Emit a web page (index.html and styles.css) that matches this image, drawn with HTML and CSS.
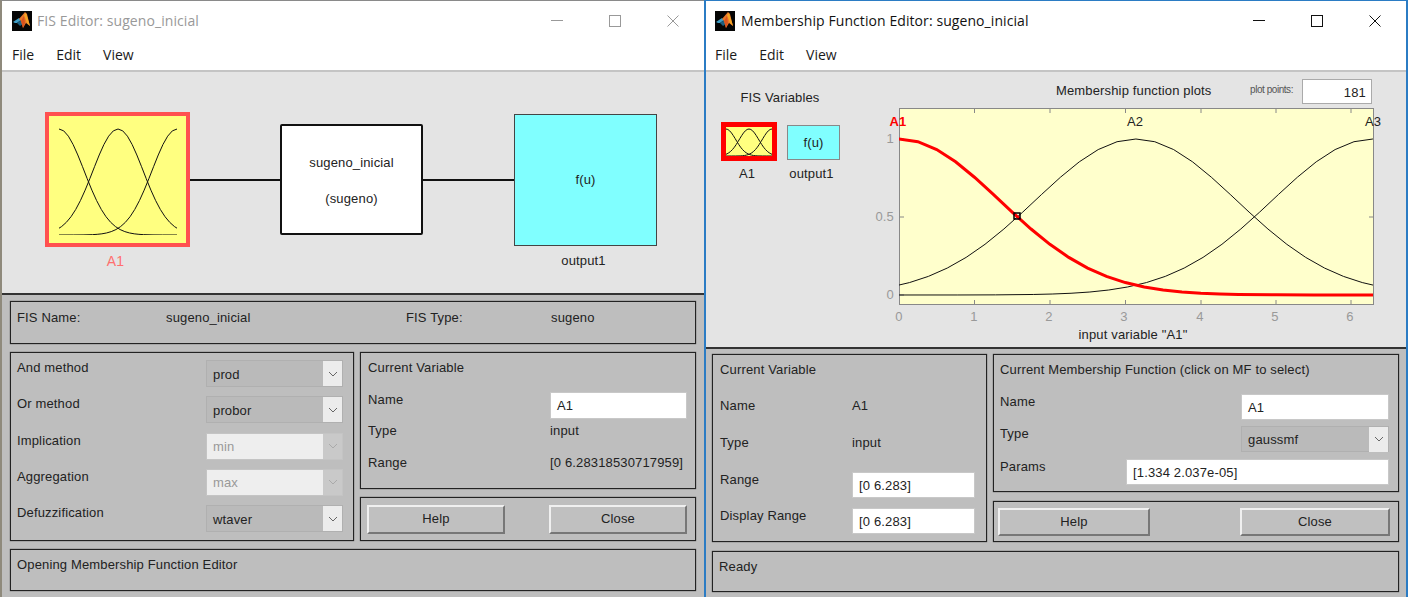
FILE: index.html
```html
<!DOCTYPE html>
<html lang="en">
<head>
    <meta charset="UTF-8">
    <title>FIS Editor and Membership Function Editor</title>
    <link rel="stylesheet" href="styles.css">
</head>
<body>
    <svg class="defs" width="0" height="0">
        <defs>
            <!-- gaussian bell, sigma 1.334, in data units: x is the input, y the membership -->
            <polyline id="bell" points="-6.3,0 -5.5,.0002 -5,.0009 -4.5,.0034 -4.25,.0063 -4,.0112 -3.75,.0192 -3.5,.032 -3.25,.0514 -3,.0798 -2.75,.1194 -2.5,.1727 -2.25,.2411 -2,.325 -1.75,.423 -1.5,.5314 -1.25,.6447 -1,.755 -.75,.8538 -.5,.9322 -.25,.9826 0,1 .25,.9826 .5,.9322 .75,.8538 1,.755 1.25,.6447 1.5,.5314 1.75,.423 2,.325 2.25,.2411 2.5,.1727 2.75,.1194 3,.0798 3.25,.0514 3.5,.032 3.75,.0192 4,.0112 4.25,.0063 4.5,.0034 5,.0009 5.5,.0002 6.3,0"/>
            <symbol id="matlab" viewBox="0 0 20 20">
                <rect width="20" height="20" fill="#050505"/>
                <polygon points="1,11 7,7 9,9 5,12 3,12" fill="#3f9fc8"/>
                <polygon points="5,12 9,9 11,13 8,15" fill="#1d5f80"/>
                <polygon points="7,8 13,1 15,3 18,15 14,12 11,17 9,10" fill="#e8772a"/>
                <polygon points="12,4 14,2 18,15 15,12" fill="#f5a623"/>
                <polygon points="9,10 12,5 13,12 11,17" fill="#d9531e"/>
            </symbol>
            <symbol id="chevron" viewBox="0 0 10 6">
                <polyline points="1,1 5,5 9,1" fill="none" stroke="currentColor"/>
            </symbol>
        </defs>
    </svg>

    <div class="window fis">
        <div class="titlebar">
            <svg class="logo"><use href="#matlab"/></svg>
            <span class="title">FIS Editor: sugeno_inicial</span>
            <div class="controls">
                <svg viewBox="0 0 12 12"><path d="M0 5.500h12"/></svg>
                <svg viewBox="0 0 12 12"><rect x=".5" y=".5" width="11" height="11"/></svg>
                <svg viewBox="0 0 12 12"><path d="M.5.5l11 11M11.500.5l-11 11"/></svg>
            </div>
        </div>
        <div class="menubar"><span>File</span><span>Edit</span><span>View</span></div>

        <div class="diagram">
            <div class="node node-input">
                <svg class="mf-icon" viewBox="0 0 118 111">
                    <g transform="translate(0,111) scale(18.8,-106)">
                        <use href="#bell"/>
                        <use href="#bell" x="3.14"/>
                        <use href="#bell" x="6.28"/>
                    </g>
                </svg>
            </div>
            <div class="wire"></div>
            <div class="node node-system">
                <span>sugeno_inicial</span>
                <span>(sugeno)</span>
            </div>
            <div class="wire"></div>
            <div class="node node-output">f(u)</div>
            <div class="node-label label-input">A1</div>
            <div class="node-label label-output">output1</div>
        </div>

        <div class="panel fis-panel">
            <div class="frame fis-name">
                <span>FIS Name:</span>
                <span>sugeno_inicial</span>
                <span>FIS Type:</span>
                <span>sugeno</span>
            </div>
            <div class="frame methods">
                <span class="field-label">And method</span>
                <div class="popup"><span>prod</span><i><svg><use href="#chevron"/></svg></i></div>
                <span class="field-label">Or method</span>
                <div class="popup"><span>probor</span><i><svg><use href="#chevron"/></svg></i></div>
                <span class="field-label">Implication</span>
                <div class="popup disabled"><span>min</span><i><svg><use href="#chevron"/></svg></i></div>
                <span class="field-label">Aggregation</span>
                <div class="popup disabled"><span>max</span><i><svg><use href="#chevron"/></svg></i></div>
                <span class="field-label">Defuzzification</span>
                <div class="popup"><span>wtaver</span><i><svg><use href="#chevron"/></svg></i></div>
            </div>
            <div class="frame variable">
                <span class="wide">Current Variable</span>
                <span>Name</span>
                <div class="edit">A1</div>
                <span>Type</span>
                <span>input</span>
                <span>Range</span>
                <span>[0 6.28318530717959]</span>
            </div>
            <div class="frame buttons">
                <button>Help</button>
                <button>Close</button>
            </div>
            <div class="frame status">Opening Membership Function Editor</div>
        </div>
    </div>

    <div class="window mf">
        <div class="titlebar">
            <svg class="logo"><use href="#matlab"/></svg>
            <span class="title">Membership Function Editor: sugeno_inicial</span>
            <div class="controls">
                <svg viewBox="0 0 12 12"><path d="M0 5.500h12"/></svg>
                <svg viewBox="0 0 12 12"><rect x=".5" y=".5" width="11" height="11"/></svg>
                <svg viewBox="0 0 12 12"><path d="M.5.5l11 11M11.500.5l-11 11"/></svg>
            </div>
        </div>
        <div class="menubar"><span>File</span><span>Edit</span><span>View</span></div>

        <div class="plot-area">
            <div class="vars">
                <div class="vars-title">FIS Variables</div>
                <div class="vars-row">
                    <div class="var">
                        <div class="var-box var-input">
                            <svg class="mf-icon" viewBox="0 0 46 29">
                                <g transform="translate(0,29) scale(7.32,-27)">
                                    <use href="#bell"/>
                                    <use href="#bell" x="3.14"/>
                                    <use href="#bell" x="6.28"/>
                                </g>
                            </svg>
                        </div>
                        <span>A1</span>
                    </div>
                    <div class="var">
                        <div class="var-box var-output">f(u)</div>
                        <span>output1</span>
                    </div>
                </div>
            </div>
            <div class="plots">
                <div class="plots-head">
                    <span class="plots-title">Membership function plots</span>
                    <span class="plot-points">plot points:</span>
                    <div class="edit points">181</div>
                </div>
                <svg class="plot" width="530" height="240" viewBox="0 0 530 240">
                    <defs><clipPath id="plotClip"><rect x="29" y="3" width="474" height="196"/></clipPath></defs>
                    <rect class="plot-bg" x="29.500" y="3.500" width="474" height="196"/>
                    <path class="ticks" d="M104.500 4v4M180 4v4M255.500 4v4M331 4v4M406 4v4M481 4v4M104.500 199v-4M180 199v-4M255.500 199v-4M331 199v-4M406 199v-4M481 199v-4M30 112h4M503 112h-4M30 34h4M30 190h4"/>
                    <g clip-path="url(#plotClip)">
                        <g transform="translate(29,190) scale(75.45,-156)">
                            <use class="curve" href="#bell" x="3.14"/>
                            <use class="curve" href="#bell" x="6.28"/>
                            <use class="curve-active" href="#bell"/>
                        </g>
                    </g>
                    <rect class="handle" x="144" y="108" width="6" height="6"/>
                    <g class="tick-labels">
                        <text x="29" y="216" text-anchor="middle">0</text>
                        <text x="104" y="216" text-anchor="middle">1</text>
                        <text x="179" y="216" text-anchor="middle">2</text>
                        <text x="254" y="216" text-anchor="middle">3</text>
                        <text x="330" y="216" text-anchor="middle">4</text>
                        <text x="405" y="216" text-anchor="middle">5</text>
                        <text x="480" y="216" text-anchor="middle">6</text>
                        <text x="24" y="38" text-anchor="end">1</text>
                        <text x="24" y="116" text-anchor="end">0.5</text>
                        <text x="24" y="194" text-anchor="end">0</text>
                    </g>
                    <text class="mf-name active" x="28" y="21" text-anchor="middle">A1</text>
                    <text class="mf-name" x="265" y="21" text-anchor="middle">A2</text>
                    <text class="mf-name" x="503" y="21" text-anchor="middle">A3</text>
                    <text class="mf-name" x="263" y="234" text-anchor="middle">input variable "A1"</text>
                </svg>
            </div>
        </div>

        <div class="panel mf-panel">
            <div class="frame mf-variable">
                <span class="wide">Current Variable</span>
                <span>Name</span>
                <span>A1</span>
                <span>Type</span>
                <span>input</span>
                <span>Range</span>
                <div class="edit">[0 6.283]</div>
                <span>Display Range</span>
                <div class="edit">[0 6.283]</div>
            </div>
            <div class="frame mf-function">
                <span class="wide">Current Membership Function (click on MF to select)</span>
                <span>Name</span>
                <div class="edit name-edit">A1</div>
                <span>Type</span>
                <div class="popup name-edit"><span>gaussmf</span><i><svg><use href="#chevron"/></svg></i></div>
                <span>Params</span>
                <div class="edit params-edit">[1.334 2.037e-05]</div>
            </div>
            <div class="frame buttons">
                <button>Help</button>
                <button>Close</button>
            </div>
            <div class="frame status">Ready</div>
        </div>
    </div>
</body>
</html>
```

FILE: styles.css
```css
html, body {
    height: 100%;
}
body {
    margin: 0;
    display: flex;
    height: 597px;
    overflow: hidden;
    font-family: "Liberation Sans", Arial, sans-serif;
    font-size: 13px;
    letter-spacing: .15px;
    line-height: 14px;
    color: #222;
    background-color: #fff;
}
.defs {
    position: absolute;
}
.window {
    width: 704px;
    height: 597px;
    box-sizing: border-box;
    display: flex;
    flex-direction: column;
    border-top: 1px solid #8a8a8a;
    border-left: 2px solid #8f8a7c;
}
.window.mf {
    border-top-color: #2b7cc4;
    border-left-color: #2b7cc4;
    border-right: 2px solid #2b7cc4;
}

/* title + menu */
.titlebar {
    height: 39px;
    flex: none;
    display: flex;
    align-items: center;
    background-color: #fff;
    font-family: "Open Sans", "Noto Sans", sans-serif;
    font-size: 14px;
    letter-spacing: .08px;
}
.logo {
    width: 20px;
    height: 20px;
    margin-left: 10px;
    margin-right: 5px;
}
.mf .logo {
    margin-left: 9px;
    margin-right: 6px;
}
.fis .title {
    color: #999;
}
.mf .title {
    color: #111;
}
.controls {
    margin-left: auto;
    padding-right: 2px;
    display: flex;
}
.controls svg {
    width: 12px;
    height: 12px;
    padding: 0 23px;
    fill: none;
    stroke: #111;
    stroke-width: 1;
}
.fis .controls svg {
    stroke: #999;
}
.menubar {
    height: 30px;
    flex: none;
    display: flex;
    align-items: center;
    gap: 22px;
    padding-left: 10px;
    background-color: #fff;
    border-bottom: 2px solid #c4c4c4;
    font-family: "Open Sans", "Noto Sans", sans-serif;
    font-size: 14px;
    letter-spacing: 0;
    color: #1a1a1a;
}
.mf .menubar {
    padding-left: 9px;
}

/* FIS diagram */
.diagram {
    height: 221px;
    flex: none;
    box-sizing: border-box;
    padding: 40px 0 0 43px;
    display: grid;
    grid-template-columns: 145px 90px 143px 91px 143px;
    grid-template-rows: 135px 14px;
    row-gap: 7px;
    align-items: center;
    background-color: #e4e4e4;
}
.node {
    box-sizing: border-box;
    display: flex;
    align-items: center;
    justify-content: center;
}
.node-input {
    height: 135px;
    border: 4px solid #ff5050;
    background-color: #ffff80;
}
.mf-icon {
    width: 118px;
    height: 111px;
    overflow: hidden;
    fill: none;
    stroke: #111;
}
.mf-icon use, .plot use {
    vector-effect: non-scaling-stroke;
}
#bell {
    vector-effect: non-scaling-stroke;
}
.wire {
    height: 2px;
    background-color: #111;
}
.node-system {
    height: 111px;
    padding-top: 2px;
    flex-direction: column;
    gap: 22px;
    border: 2px solid #111;
    border-radius: 2px;
    background-color: #fff;
}
.node-output {
    height: 132px;
    border: 1px solid #444;
    background-color: #80ffff;
}
.node-label {
    padding-right: 4px;
    text-align: center;
}
.label-input {
    grid-column: 1;
    color: #ff6f6f;
    font-size: 14px;
}
.label-output {
    grid-column: 5;
}

/* grey control panels */
.panel {
    flex: 1;
    display: grid;
    background-color: #bebebe;
    border-top: 2px solid #333;
    align-content: start;
}
.frame {
    box-sizing: border-box;
    border: 1px solid #222;
    box-shadow: 0 0 1px #333;
}
.fis-panel {
    padding: 6px 0 0 8px;
    grid-template-columns: 344px 336px;
    grid-template-rows: 43px 137px 44px 42px;
    gap: 8px 6px;
}
.fis-name {
    grid-column: 1 / 3;
    padding: 9px 0 0 6px;
    display: grid;
    grid-template-columns: 149px 240px 145px 1fr;
    align-items: start;
}
.methods {
    grid-row: 2 / 4;
    padding: 7px 0 0 6px;
    display: grid;
    grid-template-columns: 189px 137px;
    grid-auto-rows: 27px;
    row-gap: 9.3px;
    align-content: start;
}
.field-label {
    padding-top: 1px;
}
.popup {
    box-sizing: border-box;
    height: 27px;
    display: flex;
    align-items: center;
    padding-left: 6px;
    border: 1px solid #b0b0b0;
    background-color: #bababa;
}
.popup span {
    flex: 1;
    padding-top: 2px;
}
.popup i {
    width: 19px;
    height: 25px;
    display: flex;
    align-items: center;
    justify-content: center;
    background-color: #ececec;
    color: #666;
}
.popup i svg {
    width: 10px;
    height: 6px;
}
.popup.disabled {
    background-color: #eee;
    color: #999;
    border-color: #c4c4c4;
}
.popup.disabled i {
    background-color: #c9c9c9;
    color: #aaa;
}
.variable {
    padding: 8px 8px 0 7px;
    display: grid;
    grid-template-columns: 182px 1fr;
    grid-auto-rows: 31.5px;
    align-items: start;
}
.wide {
    grid-column: 1 / 3;
}
.edit {
    box-sizing: border-box;
    height: 27px;
    display: flex;
    align-items: center;
    padding: 2px 6px 0;
    border: 1px solid #c8c8c8;
    background-color: #fff;
}
.variable .edit {
    margin-top: -1px;
}
.buttons {
    display: flex;
    justify-content: space-between;
    align-items: center;
    padding: 0 8px 0 6px;
}
button {
    box-sizing: border-box;
    width: 138px;
    height: 29px;
    padding: 0;
    border: 2px solid;
    border-color: #f0f0f0 #777 #777 #f0f0f0;
    background-color: #c0c0c0;
    font: inherit;
    letter-spacing: inherit;
    color: inherit;
}
.status {
    grid-column: 1 / 3;
    padding: 8px 6px 0;
}

/* membership function editor */
.plot-area {
    height: 275px;
    flex: none;
    box-sizing: border-box;
    padding-top: 7px;
    display: flex;
    background-color: #e4e4e4;
}
.vars {
    width: 164px;
    box-sizing: border-box;
    padding: 12px 0 0 15px;
}
.vars-title {
    width: 118px;
    text-align: center;
}
.vars-row {
    margin-top: 17px;
    display: flex;
    gap: 10px;
}
.var {
    display: flex;
    flex-direction: column;
    align-items: center;
    gap: 6px;
}
.var > span {
    padding-right: 4px;
}
.var-box {
    box-sizing: border-box;
    display: flex;
    align-items: center;
    justify-content: center;
}
.var-input {
    width: 56px;
    height: 39px;
    border: 5px solid #f00;
    background-color: #ffff80;
}
.var-input .mf-icon {
    width: 46px;
    height: 29px;
}
.var-output {
    width: 53px;
    height: 35px;
    margin-top: 3px;
    margin-bottom: 1px;
    border: 1px solid #888;
    background-color: #80ffff;
}
.plots {
    width: 530px;
}
.plots-head {
    height: 25px;
    display: flex;
    align-items: center;
    padding-right: 28px;
}
.plots-title {
    margin-left: 186px;
    margin-bottom: 1px;
}
.plot-points {
    margin-left: auto;
    margin-right: 9px;
    margin-bottom: 4px;
    font-size: 10px;
    letter-spacing: -.45px;
    color: #555;
}
.edit.points {
    width: 70px;
    height: 25px;
    justify-content: flex-end;
    border-color: #aaa;
    padding-right: 5px;
}
.plot {
    display: block;
    margin-top: 1px;
}
.plot-bg {
    fill: #ffffcc;
    stroke: #888;
}
.ticks {
    stroke: #888;
    fill: none;
}
.curve {
    fill: none;
    stroke: #111;
    stroke-width: 1;
}
.curve-active {
    fill: none;
    stroke: #f00;
    stroke-width: 3;
}
.handle {
    fill: none;
    stroke: #000;
    stroke-width: 1.500;
}
.tick-labels text {
    fill: #999;
    font-size: 13px;
}
.mf-name {
    fill: #222;
    font-size: 13px;
}
.mf-name.active {
    fill: #f00;
    font-weight: bold;
}
.mf-panel {
    padding: 5px 0 0 6px;
    grid-template-columns: 275px 406px;
    grid-template-rows: 138px 41px 41px;
    gap: 9px 6px;
}
.mf-variable {
    grid-row: 1 / 3;
    padding: 8px 0 0 7px;
    display: grid;
    grid-template-columns: 132px 123px;
    grid-template-rows: 36px 37px 37px 36px 26px;
    align-items: start;
}
.mf-variable .edit {
    height: 26px;
    margin-top: -1px;
}
.mf-function {
    padding: 8px 9px 0 6px;
    display: grid;
    grid-template-columns: 126px 115px 148px;
    grid-template-rows: 32px 32px 33px 26px;
    align-items: start;
}
.mf-function .wide {
    grid-column: 1 / 4;
}
.mf-function > span:nth-of-type(n+2) {
    grid-column: 1;
}
.name-edit {
    grid-column: 3;
    height: 26px;
    margin-top: -1px;
}
.params-edit {
    grid-column: 2 / 4;
    height: 26px;
    margin-top: -1px;
}
.mf-panel .buttons {
    padding: 0 8px 0 4px;
}
.mf-panel .buttons button {
    width: 152px;
    height: 28px;
}
.mf-panel .buttons button:last-child {
    width: 150px;
}
.mf-panel .status {
    padding-top: 8px;
}
```
